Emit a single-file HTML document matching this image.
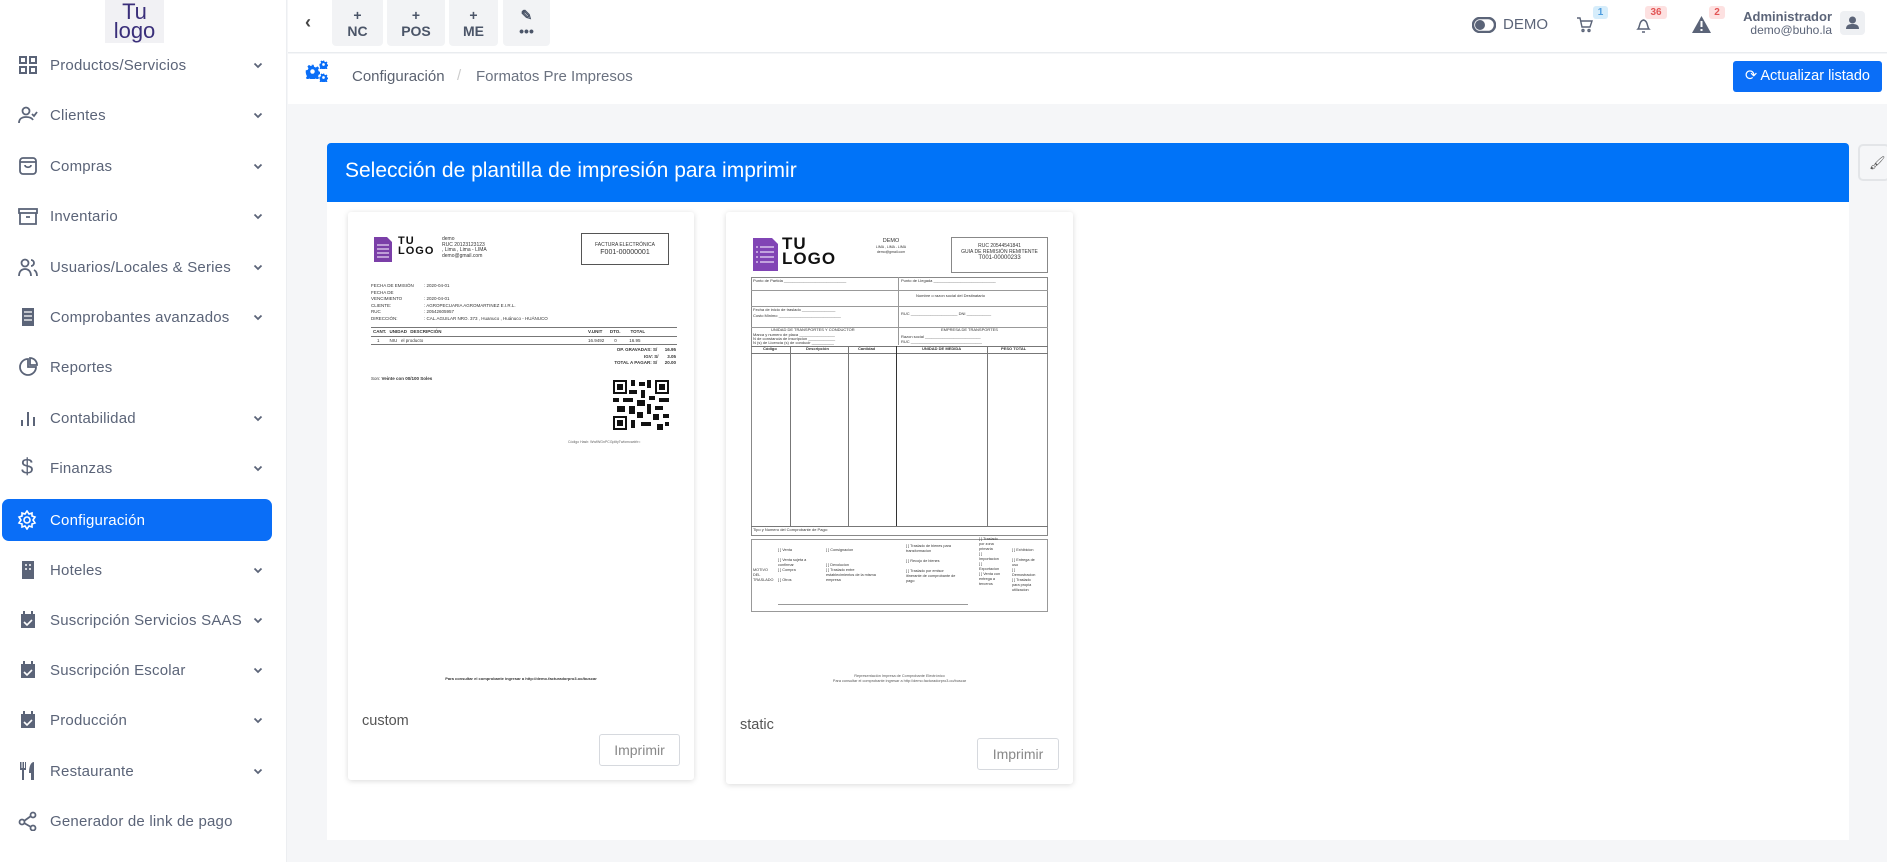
<!DOCTYPE html>
<html><head><meta charset="utf-8"><style>
*{box-sizing:border-box;margin:0;padding:0}
body{width:1887px;height:862px;overflow:hidden;background:#f5f6f8;font-family:"Liberation Sans",sans-serif;color:#5b6478;position:relative}
.abs{position:absolute}
#side{left:0;top:0;width:287px;height:862px;background:#fff;border-right:1px solid #eceef1}
.it{position:absolute;left:0;width:287px;height:40px;font-size:15px;color:#5b6478;letter-spacing:.2px}
.it .ic{position:absolute;left:18px;top:10px;width:20px;height:20px}
.it .tx{position:absolute;left:50px;top:12px}
.it .ch{position:absolute;left:253px;top:17px;width:10px;height:7px}
.act{left:2px!important;width:270px!important;background:#0a6ef7;border-radius:7px;color:#fff}
#top{left:288px;top:0;width:1599px;height:53px;background:#fff;border-bottom:1px solid #e9ecef}
.qb{position:absolute;top:0;height:46px;background:#f2f3f5;border-radius:0 0 4px 4px;text-align:center;color:#4b5568;font-weight:bold;font-size:14px;line-height:16px;padding-top:7px}
#bc{left:288px;top:54px;width:1599px;height:50px;background:#fff}
.card{position:absolute;background:#fff;box-shadow:0 1px 6px rgba(0,0,0,.15);border-radius:3px}
.t{position:absolute;font-size:4.5px;color:#333;white-space:nowrap;line-height:1.1}
.btn{position:absolute;border:1px solid #d6d9de;border-radius:3px;color:#888;font-size:14px;text-align:center;line-height:30px;background:#fff}
.badge{position:absolute;font-size:10px;font-weight:bold;border-radius:3px;text-align:center;line-height:13px;height:13px}
.l{position:absolute;background:#777}
</style></head><body>
<svg width="0" height="0" style="position:absolute"><defs><symbol id="chv" viewBox="0 0 10 7"><path d="M1.5 1.5l3.5 3.5 3.5-3.5" fill="none" stroke="#5b6478" stroke-width="1.8"/></symbol><symbol id="gear" viewBox="-10 -10 20 20"><path d="M-1.5-9h3l.6 2.6 2.3 1 2.3-1.4 2.1 2.1-1.4 2.3 1 2.3 2.6.6v3l-2.6.6-1 2.3 1.4 2.3-2.1 2.1-2.3-1.4-2.3 1-.6 2.6h-3l-.6-2.6-2.3-1-2.3 1.4-2.1-2.1 1.4-2.3-1-2.3L-9 1.5v-3l2.6-.6 1-2.3-1.4-2.3 2.1-2.1 2.3 1.4 2.3-1z" fill="#0a6ef7"/><circle r="3" fill="#fff"/></symbol></defs></svg>

<div id="side" class="abs">
 <div class="abs" style="left:105px;top:0;width:59px;height:43px;background:#f1f1f4;color:#3a2f7a;font-size:22px;line-height:19px;text-align:center;padding-top:2px">Tu<br>logo</div>
 <div class="it" style="top:45px"><svg class="ic" viewBox="0 0 20 20" fill="none" stroke="#5b6478" stroke-width="2"><rect x="2" y="2" width="6" height="6"/><rect x="12" y="2" width="6" height="6"/><rect x="2" y="12" width="6" height="6"/><rect x="12" y="12" width="6" height="6"/></svg><span class="tx">Productos/Servicios</span><svg class="ch"><use href="#chv"/></svg></div>
 <div class="it" style="top:95px"><svg class="ic" viewBox="0 0 20 20" fill="none" stroke="#5b6478" stroke-width="1.8"><circle cx="8" cy="6" r="3.5"/><path d="M1 18c0-4 3-6 7-6s6 1 7 3M14 9l2 2 3-4"/></svg><span class="tx">Clientes</span><svg class="ch"><use href="#chv"/></svg></div>
 <div class="it" style="top:146px"><svg class="ic" viewBox="0 0 20 20" fill="none" stroke="#5b6478" stroke-width="1.8"><rect x="2" y="2" width="16" height="16" rx="3"/><path d="M2 6h16M7 9c0 3 6 3 6 0"/></svg><span class="tx">Compras</span><svg class="ch"><use href="#chv"/></svg></div>
 <div class="it" style="top:196px"><svg class="ic" viewBox="0 0 20 20" fill="none" stroke="#5b6478" stroke-width="1.8"><rect x="1" y="3" width="18" height="4"/><path d="M2 7v11h16V7M8 11h4"/></svg><span class="tx">Inventario</span><svg class="ch"><use href="#chv"/></svg></div>
 <div class="it" style="top:247px"><svg class="ic" viewBox="0 0 20 20" fill="none" stroke="#5b6478" stroke-width="1.8"><circle cx="7" cy="6" r="3.5"/><path d="M1 19c0-5 3-7 6-7s6 2 6 7M13 3a3 3 0 010 6M16 13c2 1 3 3 3 6"/></svg><span class="tx">Usuarios/Locales &amp; Series</span><svg class="ch"><use href="#chv"/></svg></div>
 <div class="it" style="top:297px"><svg class="ic" viewBox="0 0 20 20"><path d="M4 1h12v18H4z" fill="#5b6478"/><path d="M6 5h8M6 9h8M6 13h8" stroke="#fff" stroke-width="1.2"/></svg><span class="tx">Comprobantes avanzados</span><svg class="ch"><use href="#chv"/></svg></div>
 <div class="it" style="top:347px"><svg class="ic" viewBox="0 0 20 20" fill="none" stroke="#5b6478" stroke-width="1.8"><path d="M10 2a8 8 0 108 8h-8z"/><path d="M12 1v7h7a7 7 0 00-7-7z"/></svg><span class="tx">Reportes</span></div>
 <div class="it" style="top:398px"><svg class="ic" viewBox="0 0 20 20" stroke="#5b6478" stroke-width="2"><path d="M4 18v-6M10 18V4M16 18v-9"/></svg><span class="tx">Contabilidad</span><svg class="ch"><use href="#chv"/></svg></div>
 <div class="it" style="top:448px"><span class="ic" style="font-size:22px;top:6px;left:21px">$</span><span class="tx">Finanzas</span><svg class="ch"><use href="#chv"/></svg></div>
 <div class="it act" style="top:499px;height:42px"><svg class="ic" style="left:15px;top:11px" viewBox="0 0 20 20" fill="none" stroke="#fff" stroke-width="1.6"><circle cx="10" cy="10" r="3"/><path d="M10 1l2 3 3-1 0 3 3 1-2 3 2 3-3 1 0 3-3-1-2 3-2-3-3 1 0-3-3-1 2-3-2-3 3-1 0-3 3 1z"/></svg><span class="tx" style="left:48px;top:13px">Configuración</span></div>
 <div class="it" style="top:550px"><svg class="ic" viewBox="0 0 20 20"><rect x="4" y="1" width="12" height="18" fill="#5b6478"/><path d="M8 4v2M12 4v2M8 8v2M12 8v2" stroke="#fff" stroke-width="1.5"/></svg><span class="tx">Hoteles</span><svg class="ch"><use href="#chv"/></svg></div>
 <div class="it" style="top:600px"><svg class="ic" viewBox="0 0 20 20"><rect x="3" y="4" width="14" height="14" fill="#5b6478"/><path d="M6 1v4M14 1v4" stroke="#5b6478" stroke-width="2"/><path d="M6 12l3 3 5-5" stroke="#fff" stroke-width="1.6" fill="none"/></svg><span class="tx">Suscripción Servicios SAAS</span><svg class="ch"><use href="#chv"/></svg></div>
 <div class="it" style="top:650px"><svg class="ic" viewBox="0 0 20 20"><rect x="3" y="4" width="14" height="14" fill="#5b6478"/><path d="M6 1v4M14 1v4" stroke="#5b6478" stroke-width="2"/><path d="M6 12l3 3 5-5" stroke="#fff" stroke-width="1.6" fill="none"/></svg><span class="tx">Suscripción Escolar</span><svg class="ch"><use href="#chv"/></svg></div>
 <div class="it" style="top:700px"><svg class="ic" viewBox="0 0 20 20"><rect x="3" y="4" width="14" height="14" fill="#5b6478"/><path d="M6 1v4M14 1v4" stroke="#5b6478" stroke-width="2"/><path d="M6 12l3 3 5-5" stroke="#fff" stroke-width="1.6" fill="none"/></svg><span class="tx">Producción</span><svg class="ch"><use href="#chv"/></svg></div>
 <div class="it" style="top:751px"><svg class="ic" viewBox="0 0 20 20" fill="#5b6478"><path d="M2 1h1.5v6h1V1h1.5v6h1V1H8v8H6v10H4V9H2z"/><path d="M16 1v18h-3v-7h-2C11 5 13 1 16 1z"/></svg><span class="tx">Restaurante</span><svg class="ch"><use href="#chv"/></svg></div>
 <div class="it" style="top:801px"><svg class="ic" viewBox="0 0 20 20" fill="none" stroke="#5b6478" stroke-width="1.8"><circle cx="4" cy="11" r="2.5"/><circle cx="15" cy="4" r="2.5"/><circle cx="15" cy="17" r="2.5"/><path d="M6 10l7-5M6 12l7 4"/></svg><span class="tx">Generador de link de pago</span></div>
</div>

<div id="top" class="abs">
 <span class="abs" style="left:17px;top:12px;font-size:18px;font-weight:bold;color:#444">‹</span>
 <div class="qb" style="left:44px;width:51px">+<br>NC</div>
 <div class="qb" style="left:99px;width:58px">+<br>POS</div>
 <div class="qb" style="left:161px;width:49px">+<br>ME</div>
 <div class="qb" style="left:215px;width:47px">✎<br>•••</div>
 <svg class="abs" style="left:1184px;top:17px" width="24" height="16" viewBox="0 0 24 16"><rect x="1" y="1" width="22" height="14" rx="7" fill="none" stroke="#5b6478" stroke-width="2.5"/><circle cx="8" cy="8" r="5" fill="#5b6478"/></svg>
 <span class="abs" style="left:1215px;top:16px;font-size:15px">DEMO</span>
 <svg class="abs" style="left:1288px;top:16px" width="17" height="17" viewBox="0 0 17 17" fill="none" stroke="#5b6478" stroke-width="1.4"><path d="M1 2h3l2 9h8l2-6H5"/><circle cx="7" cy="14.5" r="1"/><circle cx="13" cy="14.5" r="1"/></svg>
 <div class="badge" style="left:1305px;top:6px;width:15px;background:#d6edfb;color:#4e9ddf">1</div>
 <svg class="abs" style="left:1348px;top:16px" width="15" height="18" viewBox="0 0 15 18" fill="none" stroke="#5b6478" stroke-width="1.5"><path d="M2 13c2-2 1-8 5.5-9 4.5 1 3.5 7 5.5 9zM6 16h3"/></svg>
 <div class="badge" style="left:1357px;top:6px;width:22px;background:#fde1e1;color:#e25555">36</div>
 <svg class="abs" style="left:1404px;top:16px" width="19" height="17" viewBox="0 0 19 17"><path d="M9.5 0L19 17H0z" fill="#5b6478"/><path d="M9.5 5v6M9.5 13v2" stroke="#fff" stroke-width="2"/></svg>
 <div class="badge" style="left:1421px;top:6px;width:16px;background:#fde1e1;color:#e25555">2</div>
 <div class="abs" style="left:1452px;top:9px;width:92px;text-align:right;font-size:13px;font-weight:bold;color:#5b6478">Administrador</div>
 <div class="abs" style="left:1452px;top:23px;width:92px;text-align:right;font-size:12px;color:#5b6478">demo@buho.la</div>
 <div class="abs" style="left:1552px;top:11px;width:25px;height:24px;background:#eef0f3;border-radius:4px"><svg width="25" height="24" viewBox="0 0 25 24" fill="#5b6478"><circle cx="12.5" cy="9" r="3.5"/><path d="M6 18c0-4 3-5 6.5-5s6.5 1 6.5 5z"/></svg></div>
</div>

<div id="bc" class="abs">
 <svg class="abs" style="left:17px;top:10px" width="15" height="15"><use href="#gear"/></svg>
 <svg class="abs" style="left:31px;top:6px" width="9" height="9"><use href="#gear"/></svg>
 <svg class="abs" style="left:31px;top:19px" width="9" height="9"><use href="#gear"/></svg>
 <span class="abs" style="left:64px;top:14px;font-size:15px;color:#5b6270">Configuración</span>
 <span class="abs" style="left:169px;top:13px;font-size:15px;color:#ccc">/</span>
 <span class="abs" style="left:188px;top:14px;font-size:15px;color:#6b7280">Formatos Pre Impresos</span>
 <div class="abs" style="left:1445px;top:7px;width:149px;height:31px;background:#0a6ef7;border-radius:3px;color:#fff;font-size:14.5px;line-height:31px;text-align:center">⟳ Actualizar listado</div>
</div>

<div class="abs" style="left:1858px;top:144px;width:32px;height:37px;background:#f5f6f8;border:2px solid #e3e5e8;border-radius:5px;color:#555;font-size:13px;padding:9px 0 0 9px">🖌</div>

<div class="abs" style="left:327px;top:143px;width:1522px;height:59px;background:#0073f8;border-radius:4px 4px 0 0;color:#fff;font-size:21px;padding:16px 0 0 18px">Selección de plantilla de impresión para imprimir</div>
<div class="abs" style="left:327px;top:202px;width:1522px;height:638px;background:#fff"></div>

<!-- card 1 -->
<div class="card" style="left:348px;top:212px;width:346px;height:568px">
 <svg class="abs" style="left:26px;top:25px" width="18" height="25" viewBox="0 0 18 25"><path d="M0 0h13l5 5v20H0z" fill="#7b3fa8"/><path d="M3 8h12M3 12h12M3 16h12M3 20h12" stroke="#e8d8f3" stroke-width="1.2"/></svg>
 <div class="t" style="left:50px;top:24px;font-size:11px;font-weight:bold;color:#111;line-height:10px;letter-spacing:1px">TU<br>LOGO</div>
 <div class="t" style="left:94px;top:25px;font-size:5px">demo<br>RUC 20123123123<br>, Lima , Lima - LIMA<br>demo@gmail.com</div>
 <div class="abs" style="left:233px;top:21px;width:88px;height:32px;border:1px solid #555"></div>
 <div class="t" style="left:233px;top:31px;width:88px;text-align:center;font-size:5px">FACTURA ELECTRÓNICA<br><span style="font-size:7px">F001-00000001</span></div>
 <div class="t" style="left:23px;top:71px;line-height:6.5px">FECHA DE EMISIÓN<br>FECHA DE<br>VENCIMIENTO<br>CLIENTE:<br>RUC<br>DIRECCIÓN:</div>
 <div class="t" style="left:76px;top:71px;line-height:6.5px">: 2020-04-01<br><br>: 2020-04-01<br>: AGROPECUARIA AGROMARTINEZ E.I.R.L.<br>: 20542605957<br>: CAL.AGUILAR NRO. 373 , Huanuco , Huánuco - HUÁNUCO</div>
 <div class="l" style="left:23px;top:115px;width:306px;height:1px"></div>
 <div class="t" style="left:25px;top:118px;font-weight:bold;word-spacing:2px">CANT. UNIDAD DESCRIPCIÓN</div>
 <div class="t" style="left:240px;top:118px;font-weight:bold">V.UNIT &nbsp;&nbsp;&nbsp;&nbsp; DTO. &nbsp;&nbsp;&nbsp;&nbsp;&nbsp;&nbsp; TOTAL</div>
 <div class="l" style="left:23px;top:124px;width:306px;height:1px"></div>
 <div class="t" style="left:29px;top:127px">1 &nbsp;&nbsp;&nbsp;&nbsp;&nbsp;&nbsp; NIU &nbsp; el producto</div>
 <div class="t" style="left:240px;top:127px">16.9492 &nbsp;&nbsp;&nbsp;&nbsp;&nbsp;&nbsp; 0 &nbsp;&nbsp;&nbsp;&nbsp;&nbsp;&nbsp;&nbsp;&nbsp; 16.95</div>
 <div class="l" style="left:23px;top:132px;width:306px;height:1px"></div>
 <div class="t" style="left:220px;top:135px;width:108px;text-align:right;font-weight:bold;line-height:6.5px">OP. GRAVADAS: S/ &nbsp;&nbsp;&nbsp;&nbsp; 16.95<br>IGV: S/ &nbsp;&nbsp;&nbsp;&nbsp;&nbsp; 3.05<br>TOTAL A PAGAR: S/ &nbsp;&nbsp;&nbsp;&nbsp; 20.00</div>
 <div class="t" style="left:23px;top:165px">Son: <b>Veinte con 00/100 Soles</b></div>
 <svg class="abs" style="left:265px;top:168px" width="56" height="50" viewBox="0 0 28 25" shape-rendering="crispEdges"><rect width="28" height="25" fill="#fff"/><path d="M0 0h7v7H0zM21 0h7v7h-7zM0 18h7v7H0z" fill="#111"/><path d="M1 1h5v5H1zM22 1h5v5h-5zM1 19h5v5H1z" fill="#fff"/><path d="M2 2h3v3H2zM23 2h3v3h-3zM2 20h3v3H2z" fill="#111"/><path d="M9 0h2v3H9zM13 1h3v2h-3zM17 0h2v4h-2zM8 5h4v2H8zM14 5h2v4h-2zM0 9h3v2H0zM5 9h5v2H5zM12 10h4v3h-4zM18 8h3v2h-3zM23 9h5v2h-5zM2 13h4v3H2zM8 13h3v4H8zM17 12h2v5h-2zM21 13h4v2h-4zM12 16h3v3h-3zM20 17h3v3h-3zM25 17h3v2h-3zM9 20h2v4H9zM14 21h5v2h-5zM22 22h3v3h-3zM26 21h2v2h-2z" fill="#111"/></svg>
 <div class="t" style="left:220px;top:229px;font-size:3.5px;color:#666">Código Hash: WwfWGnPCGplityTwfomcwdrlr=</div>
 <div class="t" style="left:0;top:465px;width:346px;text-align:center;font-size:4px;font-weight:bold">Para consultar el comprobante ingresar a http://demo.facturadorpro3.oo/buscar</div>
 <div class="abs" style="left:14px;top:501px;font-size:14.5px;color:#555">custom</div>
 <div class="btn" style="left:251px;top:522px;width:81px;height:32px">Imprimir</div>
</div>

<!-- card 2 -->
<div class="card" style="left:726px;top:212px;width:347px;height:572px">
 <svg class="abs" style="left:27px;top:26px" width="25" height="33" viewBox="0 0 25 33"><path d="M0 0h19l6 6v27H0z" fill="#8145b5"/><path d="M7 9h14M7 14h14M7 19h14M7 24h14" stroke="#eadcf7" stroke-width="1.3"/><path d="M3 9h2M3 14h2M3 19h2M3 24h2" stroke="#eadcf7" stroke-width="1.3"/></svg>
 <div class="t" style="left:56px;top:24px;font-size:17px;font-weight:bold;color:#111;line-height:15px;letter-spacing:1px">TU<br>LOGO</div>
 <div class="t" style="left:128px;top:27px;width:74px;text-align:center;font-size:5.5px;line-height:5.5px">DEMO<br><span style="font-size:3.5px">LIMA , LIMA - LIMA<br>demo@gmail.com</span></div>
 <div class="abs" style="left:225px;top:25px;width:97px;height:36px;border:1px solid #888"></div>
 <div class="t" style="left:225px;top:31px;width:97px;text-align:center;font-size:5px;line-height:6px">RUC 20544541841<br>GUIA DE REMISIÓN REMITENTE<br><span style="font-size:6px">T001-00000233</span></div>
 <div class="abs" style="left:25px;top:65px;width:297px;height:259px;border:1px solid #888"></div>
 <div class="l" style="left:25px;top:78px;width:297px;height:1px;background:#999"></div>
 <div class="l" style="left:25px;top:94px;width:297px;height:1px;background:#999"></div>
 <div class="l" style="left:25px;top:115px;width:297px;height:1px;background:#999"></div>
 <div class="l" style="left:172px;top:65px;width:1px;height:68px;background:#999"></div>
 <div class="t" style="left:27px;top:67px;font-size:4px">Punto de Partida ____________________________</div>
 <div class="t" style="left:175px;top:67px;font-size:4px">Punto de Llegada ____________________________</div>
 <div class="t" style="left:190px;top:82px;font-size:4px">Nombre o razon social del Destinatario</div>
 <div class="t" style="left:27px;top:95px;font-size:4px;line-height:5.5px">Fecha de inicio de traslado _______________<br>Costo Minimo ____________________________</div>
 <div class="t" style="left:175px;top:100px;font-size:4px">RUC _____________________ DNI ___________</div>
 <div class="t" style="left:45px;top:116px;font-size:4px">UNIDAD DE TRANSPORTES Y CONDUCTOR</div>
 <div class="t" style="left:215px;top:116px;font-size:4px">EMPRESA DE TRANSPORTES</div>
 <div class="t" style="left:27px;top:121px;font-size:4px;line-height:4px">Marca y numero de placa ________________<br>N de constancia de inscripcion ____________<br>N (s) de Licencia (s) de conducir __________</div>
 <div class="t" style="left:175px;top:122px;font-size:4px;line-height:5px">Razon social _________________________<br>RUC ________________________________</div>
 <div class="l" style="left:25px;top:134px;width:297px;height:1px"></div>
 <div class="t" style="left:37px;top:135px;font-size:4px;font-weight:bold">Código</div>
 <div class="t" style="left:80px;top:135px;font-size:4px;font-weight:bold">Descripción</div>
 <div class="t" style="left:132px;top:135px;font-size:4px;font-weight:bold">Cantidad</div>
 <div class="t" style="left:196px;top:135px;font-size:4px;font-weight:bold">UNIDAD DE MEDIDA</div>
 <div class="t" style="left:275px;top:135px;font-size:4px;font-weight:bold">PESO TOTAL</div>
 <div class="l" style="left:25px;top:141px;width:297px;height:1px"></div>
 <div class="l" style="left:64px;top:134px;width:1px;height:180px"></div>
 <div class="l" style="left:122px;top:134px;width:1px;height:180px"></div>
 <div class="l" style="left:170px;top:134px;width:1px;height:180px;background:#333"></div>
 <div class="l" style="left:261px;top:134px;width:1px;height:180px"></div>
 <div class="l" style="left:25px;top:314px;width:297px;height:1px"></div>
 <div class="t" style="left:27px;top:316px;font-size:4px">Tipo y Numero del Comprobante de Pago:</div>
 <div class="abs" style="left:25px;top:327px;width:297px;height:73px;border:1px solid #999"></div>
 <div class="t" style="left:27px;top:356px;font-size:3.8px;line-height:5px">MOTIVO<br>DEL<br>TRASLADO</div>
 <div class="t" style="left:52px;top:336px;font-size:3.8px;line-height:5px">[ ] Venta<br><br>[ ] Venta sujeta a<br>confirmar<br>[ ] Compra<br><br>[ ] Otros</div>
 <div class="t" style="left:100px;top:336px;font-size:3.8px;line-height:5px">[ ] Consignacion<br><br><br>[ ] Devolucion<br>[ ] Traslado entre<br>establecimientos de la misma<br>empresa</div>
 <div class="t" style="left:180px;top:332px;font-size:3.8px;line-height:5px">[ ] Traslado de bienes para<br>transformacion<br><br>[ ] Recojo de bienes<br><br>[ ] Traslado por emisor<br>itinerante de comprobante de<br>pago</div>
 <div class="t" style="left:253px;top:320px;font-size:3.8px;line-height:5px"><br>[ ] Traslado<br>por zona<br>primaria<br>[ ]<br>Importacion<br>[ ]<br>Exportacion<br>[ ] Venta con<br>entrega a<br>terceros</div>
 <div class="t" style="left:286px;top:336px;font-size:3.8px;line-height:5px">[ ] Exhibicion<br><br>[ ] Entrega de<br>uso<br>[ ]<br>Demostracion<br>[ ] Traslado<br>para propia<br>utilizacion</div>
 <div class="l" style="left:52px;top:392px;width:190px;height:1px;background:#999"></div>
 <div class="t" style="left:0;top:462px;width:347px;text-align:center;font-size:3.8px;line-height:5px;color:#555">Representación Impresa de Comprobante Electrónico<br>Para consultar el comprobante ingresar a http://demo.facturadorpro3.oo/buscar</div>
 <div class="abs" style="left:14px;top:505px;font-size:14.5px;color:#555">static</div>
 <div class="btn" style="left:251px;top:526px;width:82px;height:32px">Imprimir</div>
</div>
</body></html>
